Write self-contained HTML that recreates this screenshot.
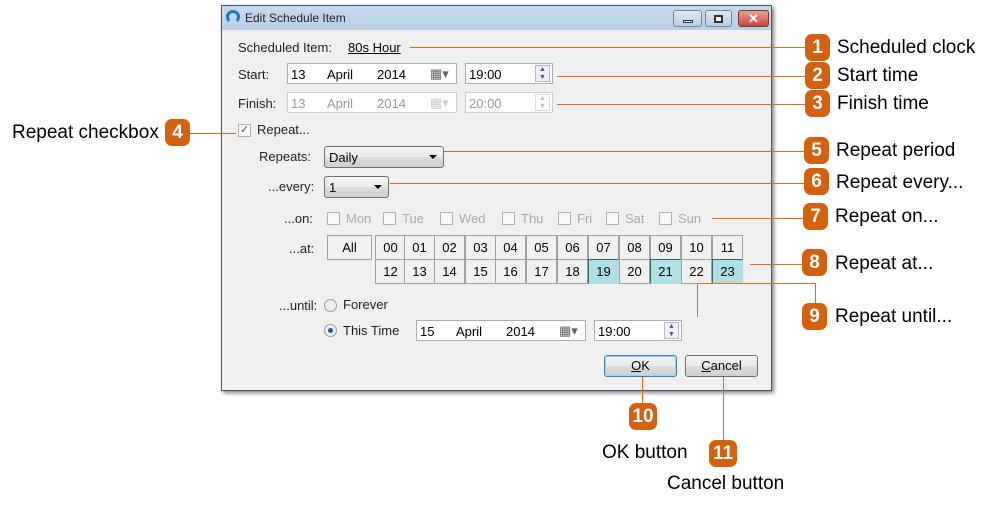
<!DOCTYPE html>
<html><head><meta charset="utf-8"><style>
*{box-sizing:border-box;margin:0;padding:0}
body{width:993px;height:510px;background:#fff;position:relative;overflow:hidden;font-family:"Liberation Sans",Arial,sans-serif;font-size:13px;color:#000}
.a{position:absolute}
.dlg{left:221px;top:5px;width:551px;height:386px;border:1px solid #3c5a78;background:linear-gradient(#c6d9ec,#b9cfe6 26px,#f0f0f0 26px);box-shadow:2px 2px 4px rgba(0,0,0,.5)}
.lbl{font-size:13px;color:#222}
.box{background:#fff;border:1px solid #abadb3;height:21px;font-size:13px}
.dis{color:#999;background:#fff}
.cb{width:13px;height:13px;border:1px solid #b0b0b0;background:#f8f8f8}
.cell{border:1px solid #a0a0a0;background:#f0f0f0;width:31px;height:25px;text-align:center;line-height:24px;font-size:13px}
.hl{background:#b0e0e6;border-color:#b0e0e6;border-left:1px solid #2c6b6b;border-top:1px solid #2c6b6b}
.btn{border:1px solid #707070;border-radius:3px;background:linear-gradient(#f2f2f2,#ebebeb 50%,#dddddd 51%,#cfcfcf);height:22px;text-align:center;line-height:20px;font-size:13px}
.ln{background:#e8681a}
.bd{width:25px;height:27px;border-radius:7px;background:#d5600d;color:#fff;font-weight:bold;font-size:19px;text-align:center;line-height:27px}
.t{font-size:19px;color:#000}
.dd{position:absolute;right:6px;top:8px;border:4px solid transparent;border-top:4px solid #000;border-bottom:0}
</style></head><body>
<div class="a dlg"></div>
<div class="a" style="left:226px;top:10px;width:14px;height:14px;border:3px solid #1b7bc8;border-bottom-color:transparent;border-radius:50%"></div>
<div class="a" style="left:245px;top:11px;font-size:12px;color:#1e1e1e">Edit Schedule Item</div>
<div class="a" style="left:673px;top:10px;width:29px;height:17px;border:1px solid #6d87a7;border-radius:3px;background:linear-gradient(#dfe9f5,#b8cde4)"><div class="a" style="left:9px;top:9px;width:10px;height:3px;background:#fff;border:1px solid #333"></div></div>
<div class="a" style="left:705px;top:10px;width:27px;height:17px;border:1px solid #6d87a7;border-radius:3px;background:linear-gradient(#dfe9f5,#b8cde4)"><div class="a" style="left:8px;top:4px;width:9px;height:8px;border:2px solid #333;background:#fff"></div></div>
<div class="a" style="left:738px;top:10px;width:31px;height:17px;border:1px solid #7a3b2e;border-radius:3px;background:linear-gradient(#e8a392,#c8463a);color:#fff;font-weight:bold;text-align:center;line-height:15px;font-size:13px">✕</div>
<div class="a" style="left:222px;top:30px;width:549px;height:360px;background:#f0f0f0"></div>

<div class="a lbl" style="left:238px;top:40px">Scheduled Item:</div>
<div class="a lbl" style="left:348px;top:40px;text-decoration:underline;color:#000">80s Hour</div>

<div class="a lbl" style="left:238px;top:67px">Start:</div>
<div class="a box" style="left:287px;top:63px;width:170px"><span class="a" style="left:3px;top:3px">13</span><span class="a" style="left:39px;top:3px">April</span><span class="a" style="left:89px;top:3px">2014</span><span class="a" style="left:142px;top:2px;color:#666">▦▾</span></div>
<div class="a box" style="left:465px;top:63px;width:88px"><span class="a" style="left:3px;top:3px">19:00</span><span class="a" style="left:69px;top:1px;width:15px;height:17px;border:1px solid #bbb;background:#eef;font-size:7px;text-align:center;color:#557;line-height:8px">▲<br>▼</span></div>

<div class="a lbl" style="left:238px;top:96px">Finish:</div>
<div class="a box dis" style="left:287px;top:92px;width:170px;border-color:#ccc"><span class="a" style="left:3px;top:3px">13</span><span class="a" style="left:39px;top:3px">April</span><span class="a" style="left:89px;top:3px">2014</span><span class="a" style="left:142px;top:2px;color:#ccc">▦▾</span></div>
<div class="a box dis" style="left:465px;top:92px;width:88px;border-color:#ccc"><span class="a" style="left:3px;top:3px">20:00</span><span class="a" style="left:69px;top:1px;width:15px;height:17px;border:1px solid #ddd;font-size:7px;text-align:center;color:#bbb;line-height:8px">▲<br>▼</span></div>

<div class="a cb" style="left:238px;top:124px;font-size:11px;line-height:11px;text-align:center;color:#334c8c">✓</div>
<div class="a lbl" style="left:257px;top:122px">Repeat...</div>

<div class="a lbl" style="left:259px;top:149px">Repeats:</div>
<div class="a btn" style="left:324px;top:146px;width:120px;text-align:left;padding-left:4px;line-height:21px">Daily<span class="dd"></span></div>
<div class="a lbl" style="left:268px;top:179px">...every:</div>
<div class="a btn" style="left:324px;top:176px;width:65px;text-align:left;padding-left:4px;line-height:21px">1<span class="dd"></span></div>

<div class="a lbl" style="left:284px;top:211px">...on:</div>
<div class="a" style="left:327px;top:211px;color:#aaa;font-size:13px;white-space:nowrap">
<span class="a cb" style="left:0;top:1px"></span><span class="a" style="left:19px">Mon</span>
<span class="a cb" style="left:56px;top:1px"></span><span class="a" style="left:75px">Tue</span>
<span class="a cb" style="left:113px;top:1px"></span><span class="a" style="left:132px">Wed</span>
<span class="a cb" style="left:175px;top:1px"></span><span class="a" style="left:194px">Thu</span>
<span class="a cb" style="left:231px;top:1px"></span><span class="a" style="left:250px">Fri</span>
<span class="a cb" style="left:279px;top:1px"></span><span class="a" style="left:298px">Sat</span>
<span class="a cb" style="left:332px;top:1px"></span><span class="a" style="left:351px">Sun</span>
</div>

<div class="a lbl" style="left:289px;top:241px">...at:</div>
<div class="a cell" style="left:327px;top:235px;width:45px">All</div>
<div class="a" style="left:375px;top:235px">
<div class="a cell" style="left:0;top:0">00</div><div class="a cell" style="left:29px;top:0">01</div><div class="a cell" style="left:59px;top:0">02</div><div class="a cell" style="left:90px;top:0">03</div><div class="a cell" style="left:120px;top:0">04</div><div class="a cell" style="left:151px;top:0">05</div><div class="a cell" style="left:182px;top:0">06</div><div class="a cell" style="left:213px;top:0">07</div><div class="a cell" style="left:244px;top:0">08</div><div class="a cell" style="left:275px;top:0">09</div><div class="a cell" style="left:306px;top:0">10</div><div class="a cell" style="left:337px;top:0">11</div>
<div class="a cell" style="left:0;top:24px">12</div><div class="a cell" style="left:29px;top:24px">13</div><div class="a cell" style="left:59px;top:24px">14</div><div class="a cell" style="left:90px;top:24px">15</div><div class="a cell" style="left:120px;top:24px">16</div><div class="a cell" style="left:151px;top:24px">17</div><div class="a cell" style="left:182px;top:24px">18</div><div class="a cell hl" style="left:213px;top:24px">19</div><div class="a cell" style="left:244px;top:24px">20</div><div class="a cell hl" style="left:275px;top:24px">21</div><div class="a cell" style="left:306px;top:24px">22</div><div class="a cell hl" style="left:337px;top:24px">23</div>
</div>

<div class="a lbl" style="left:279px;top:298px">...until:</div>
<div class="a" style="left:324px;top:299px;width:13px;height:13px;border-radius:50%;border:1px solid #999;background:#eee"></div>
<div class="a lbl" style="left:343px;top:297px">Forever</div>
<div class="a" style="left:324px;top:324px;width:13px;height:13px;border-radius:50%;border:1px solid #999;background:#eee"><div class="a" style="left:3px;top:3px;width:5px;height:5px;border-radius:50%;background:#1a5a9a"></div></div>
<div class="a lbl" style="left:343px;top:323px">This Time</div>
<div class="a box" style="left:416px;top:320px;width:170px"><span class="a" style="left:3px;top:3px">15</span><span class="a" style="left:39px;top:3px">April</span><span class="a" style="left:89px;top:3px">2014</span><span class="a" style="left:142px;top:2px;color:#666">▦▾</span></div>
<div class="a box" style="left:594px;top:320px;width:88px"><span class="a" style="left:3px;top:3px">19:00</span><span class="a" style="left:69px;top:1px;width:15px;height:17px;border:1px solid #bbb;background:#eef;font-size:7px;text-align:center;color:#557;line-height:8px">▲<br>▼</span></div>

<div class="a btn" style="left:604px;top:355px;width:73px;border-color:#3c7fb1;box-shadow:inset 0 0 0 1px #9fd3f3"><u>O</u>K</div>
<div class="a btn" style="left:685px;top:355px;width:73px"><u>C</u>ancel</div>

<div class="a ln" style="left:410px;top:47px;width:396px;height:1px"></div>
<div class="a ln" style="left:557px;top:76px;width:249px;height:1px"></div>
<div class="a ln" style="left:557px;top:104px;width:249px;height:1px"></div>
<div class="a ln" style="left:190px;top:133px;width:46px;height:1px"></div>
<div class="a ln" style="left:444px;top:151px;width:362px;height:1px"></div>
<div class="a ln" style="left:390px;top:183px;width:416px;height:1px"></div>
<div class="a ln" style="left:712px;top:218px;width:94px;height:1px"></div>
<div class="a ln" style="left:750px;top:264px;width:56px;height:1px"></div>
<div class="a ln" style="left:697px;top:283px;width:1px;height:34px"></div>
<div class="a ln" style="left:697px;top:283px;width:119px;height:1px"></div>
<div class="a ln" style="left:815px;top:283px;width:1px;height:22px"></div>
<div class="a ln" style="left:642px;top:377px;width:1px;height:28px"></div>
<div class="a ln" style="left:723px;top:377px;width:1px;height:64px"></div>

<div class="a bd" style="left:805px;top:34px">1</div><div class="a t" style="left:837px;top:37px">Scheduled clock</div>
<div class="a bd" style="left:805px;top:62px">2</div><div class="a t" style="left:837px;top:65px">Start time</div>
<div class="a bd" style="left:805px;top:90px">3</div><div class="a t" style="left:837px;top:93px">Finish time</div>
<div class="a bd" style="left:165px;top:119px">4</div><div class="a t" style="left:12px;top:122px">Repeat checkbox</div>
<div class="a bd" style="left:804px;top:137px">5</div><div class="a t" style="left:836px;top:140px">Repeat period</div>
<div class="a bd" style="left:804px;top:168px">6</div><div class="a t" style="left:836px;top:172px">Repeat every...</div>
<div class="a bd" style="left:803px;top:203px">7</div><div class="a t" style="left:835px;top:206px">Repeat on...</div>
<div class="a bd" style="left:802px;top:249px">8</div><div class="a t" style="left:835px;top:253px">Repeat at...</div>
<div class="a bd" style="left:802px;top:303px">9</div><div class="a t" style="left:835px;top:306px">Repeat until...</div>
<div class="a bd" style="left:629px;top:403px;width:28px">10</div><div class="a t" style="left:602px;top:442px">OK button</div>
<div class="a bd" style="left:709px;top:440px;width:28px">11</div><div class="a t" style="left:667px;top:473px">Cancel button</div>
</body></html>
